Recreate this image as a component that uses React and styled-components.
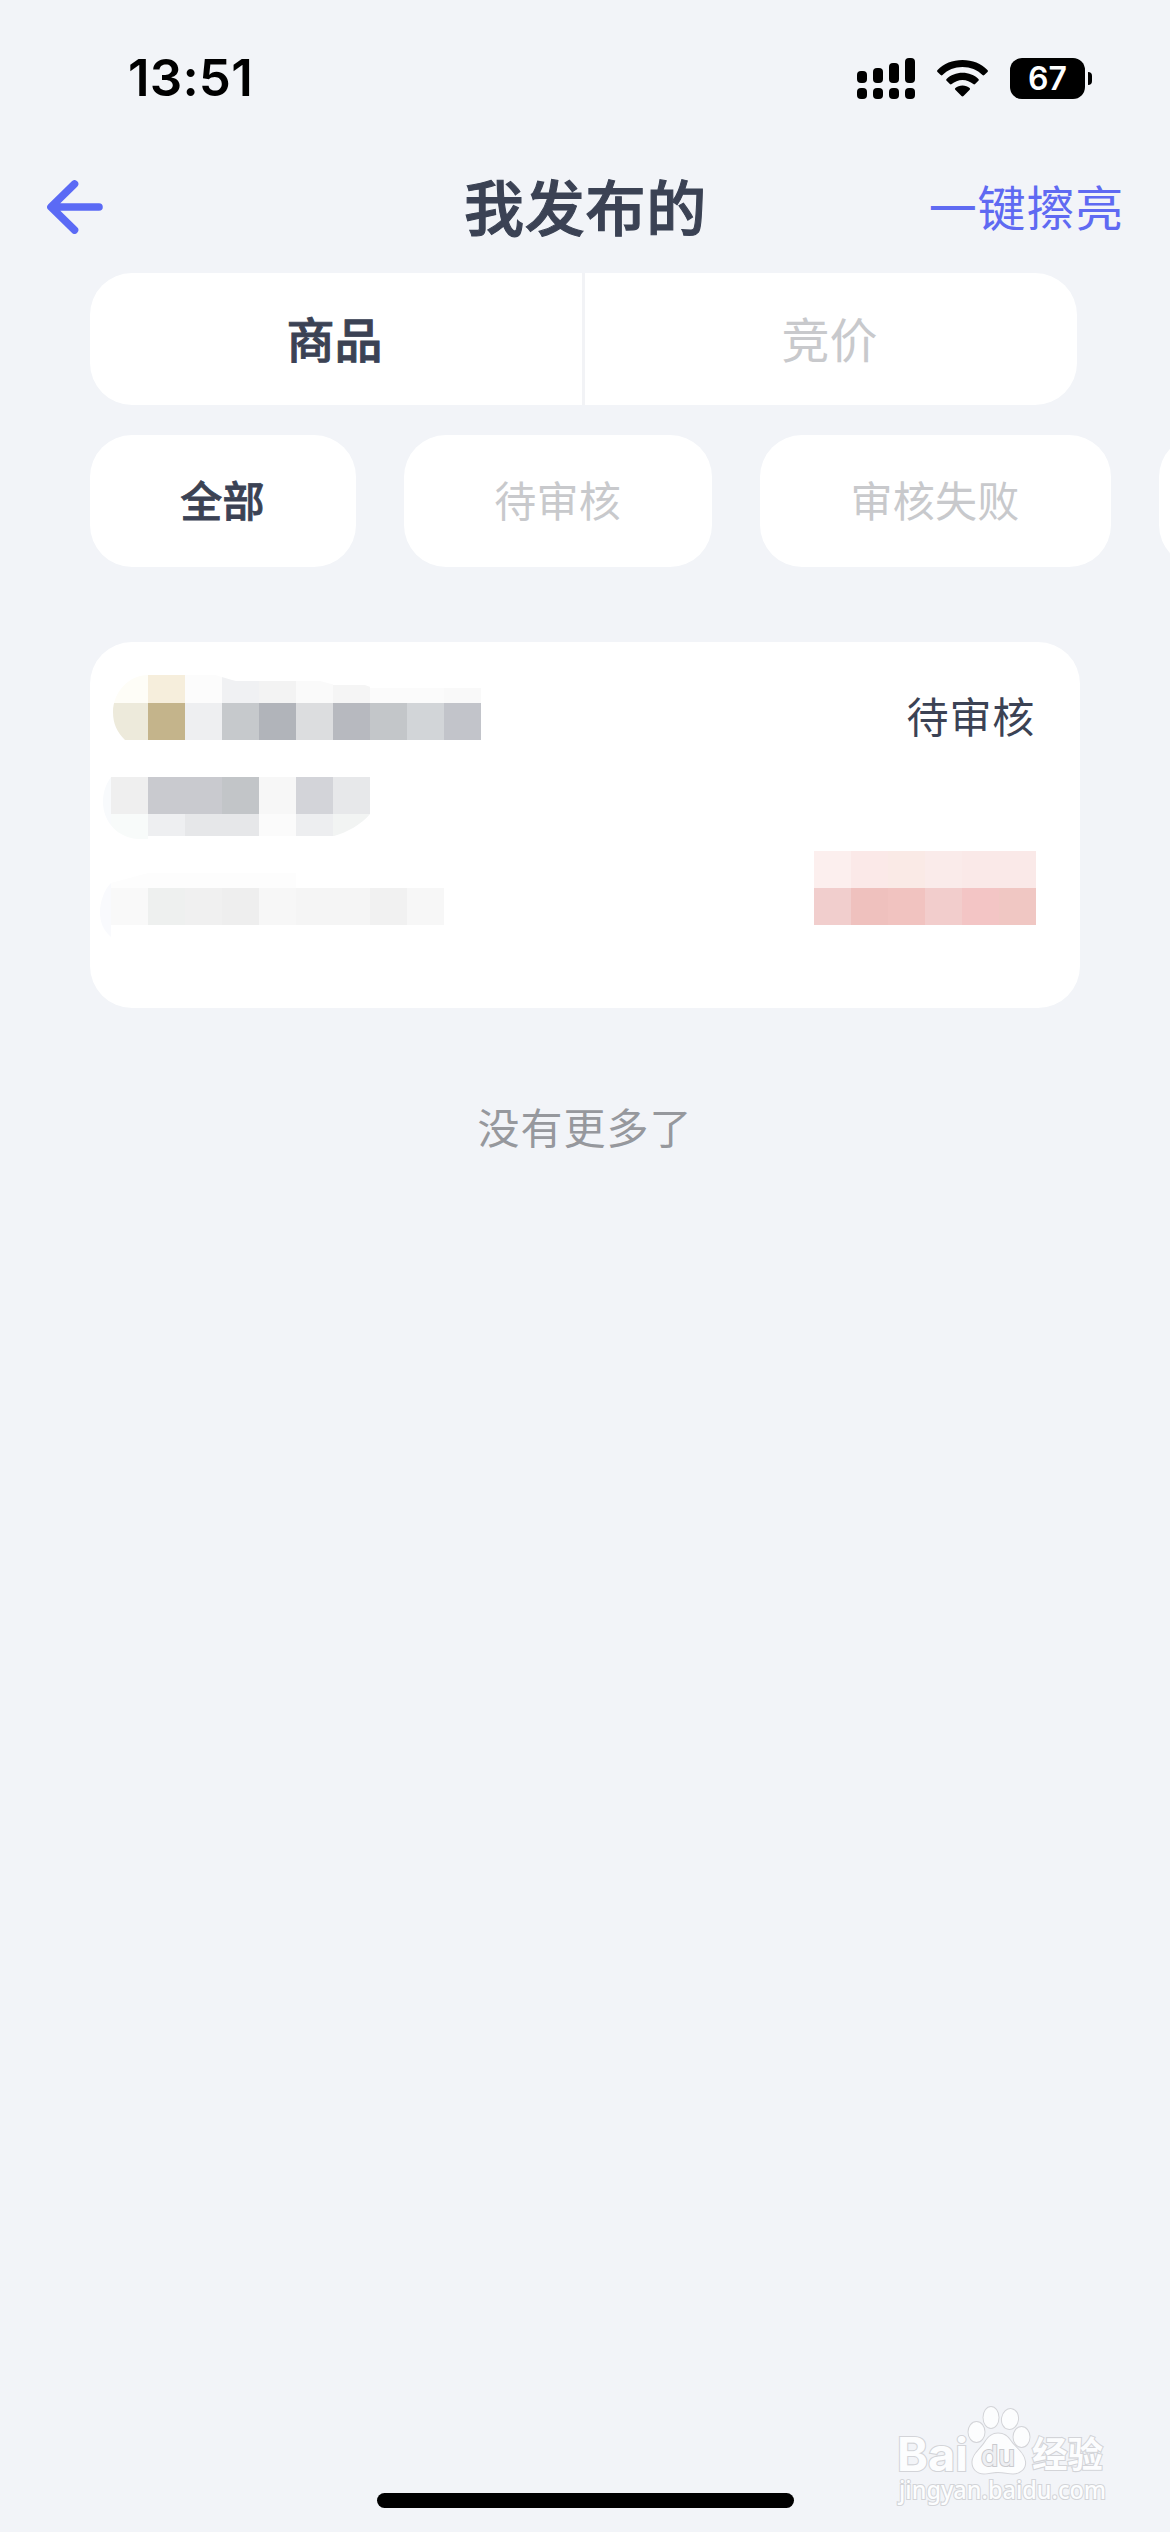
import React from "react";
import styled, { createGlobalStyle } from "styled-components";

const GlobalStyle = createGlobalStyle`
  *, *::before, *::after { box-sizing: border-box; }
  body { margin: 0; background: #f2f4f8; }
`;

const Screen = styled.div`
  display: flex;
  flex-direction: column;
  width: 1170px;
  height: 2532px;
  overflow: hidden;
  position: relative;
  background: #f2f4f8;
  color: #3b4254;
  font-family: "Noto Sans CJK SC", "Noto Sans", sans-serif;
`;

const StatusBar = styled.header`
  display: flex;
  align-items: center;
  justify-content: space-between;
  height: 156px;
  padding: 0 78px 0 128px;
`;

const Clock = styled.time`
  color: #000;
  font: 600 51px/60px Inter, sans-serif;
  letter-spacing: 0.2px;
`;

const StatusIcons = styled.div`
  display: flex;
  align-items: center;
  gap: 22px;
`;

const Battery = styled.div`
  display: flex;
  align-items: center;
  gap: 3px;
`;

const BatteryBody = styled.div`
  width: 75px;
  height: 41px;
  border-radius: 12px;
  background: #000;
  color: #fff;
  font: 600 32px/41px Inter, sans-serif;
  text-align: center;
`;

const BatteryTip = styled.div`
  width: 4px;
  height: 13px;
  border-radius: 0 4px 4px 0;
  background: #000;
`;

const NavBar = styled.nav`
  display: grid;
  grid-template-columns: 1fr auto 1fr;
  align-items: center;
  height: 104px;
  margin-bottom: 13px;
  padding: 0 46px 0 47px;
`;

const BackButton = styled.button`
  display: flex;
  justify-self: start;
  padding: 0 0 2px;
  border: 0;
  background: none;
`;

const Title = styled.h1`
  margin: 0;
  padding-bottom: 6px;
  font-size: 60px;
  font-weight: 500;
  line-height: 88px;
  letter-spacing: 0.8px;
  -webkit-text-stroke: 1.1px currentColor;
`;

const NavAction = styled.a`
  justify-self: end;
  padding-bottom: 6px;
  color: #5f6af2;
  font-size: 48px;
  line-height: 70px;
  letter-spacing: 0.8px;
`;

const Segments = styled.div`
  display: flex;
  flex: none;
  width: 987px;
  height: 132px;
  margin-left: 90px;
  border-radius: 42px;
  background: #fff;
`;

const Segment = styled.div`
  display: flex;
  flex: 1;
  align-items: center;
  justify-content: center;
  padding: 0 3px 4px 0;
  color: ${(p) => (p.$active ? "#3b4254" : "#c8c9cc")};
  font-size: 48px;
  font-weight: ${(p) => (p.$active ? 500 : 400)};
  -webkit-text-stroke: ${(p) => (p.$active ? "0.9px currentColor" : "0")};

  & + & { border-left: 3px solid #f2f3f6; }
`;

const Chips = styled.div`
  display: flex;
  flex: none;
  gap: 48px;
  margin-top: 30px;
  padding-left: 90px;
  overflow: hidden;
`;

const Chip = styled.div`
  flex: none;
  height: 132px;
  padding: 0 91.2px 0 90.2px;
  border-radius: 42px;
  background: #fff;
  color: ${(p) => (p.$active ? "#3b4254" : "#c8c9cc")};
  font-size: 42px;
  font-weight: ${(p) => (p.$active ? 500 : 400)};
  line-height: 128px;
  letter-spacing: 0.3px;
  -webkit-text-stroke: ${(p) => (p.$active ? "0.8px currentColor" : "0")};
`;

const Card = styled.article`
  display: flex;
  flex: none;
  justify-content: space-between;
  width: 990px;
  height: 366px;
  margin: 75px 0 0 90px;
  padding: 0 44px 0 8px;
  border-radius: 42px;
  background: #fff;
`;

const CardSide = styled.div`
  display: flex;
  flex-direction: column;
  align-items: flex-end;
  justify-content: space-between;
  padding: 43px 0 83px;
`;

const CardStatus = styled.span`
  padding-right: 1px;
  font-size: 42px;
  line-height: 60px;
  letter-spacing: 0.8px;
`;

const PriceMosaic = styled.div`
  display: grid;
  grid-template-columns: repeat(6, 37px);
  grid-auto-rows: 37px;
`;

const Tile = styled.i`
  background: ${(p) => p.$tone};
`;

const EndNote = styled.p`
  margin: 88px 0 0;
  color: #96989d;
  font-size: 42px;
  line-height: 60px;
  letter-spacing: 1px;
  text-align: center;
`;

const HomeIndicator = styled.div`
  width: 417px;
  height: 15px;
  margin: auto auto 24px 377px;
  border-radius: 8px;
  background: #000;
`;

const Watermark = styled.svg`
  position: absolute;
  right: 50px;
  bottom: 12px;
`;

const SIGNAL = [
  [0, 13, 12],
  [16, 10, 15],
  [32, 5, 20],
  [48, 0, 25],
];

const SignalIcon = () => (
  <svg width="58" height="41" viewBox="0 0 58 41">
    {SIGNAL.map(([x, y, h]) => (
      <g key={x}>
        <rect x={x} y={y} width="10" height={h} rx="4" />
        <rect x={x} y="30" width="10" height="11" rx="4" />
      </g>
    ))}
  </svg>
);

const WifiIcon = () => (
  <svg width="51" height="37" viewBox="0 0 51 37">
    <path d="M25.5 0C35.4 0 44.4 3.7 50.400 9.900c.7.7.7 1.300.1 2l-3.200 3.200c-.6.6-1.200.6-1.800 0C40.300 10 33.400 7.100 25.500 7.100S10.700 10 5.500 15.100c-.6.6-1.200.6-1.800 0L.5 11.900c-.6-.7-.6-1.300.1-2C6.600 3.700 15.600 0 25.500 0z" />
    <path d="M25.500 12.800c6.200 0 11.900 2.300 15.900 6.200.6.600.6 1.200 0 1.800l-3.300 3.300c-.6.6-1.200.6-1.800 0-2.900-2.600-6.600-4.200-10.800-4.200s-7.900 1.600-10.800 4.200c-.6.6-1.200.6-1.800 0L9.600 20.800c-.6-.6-.6-1.200 0-1.800 4-3.900 9.700-6.200 15.900-6.200z" />
    <path d="M25.500 25.600c2.800 0 5.300.9 7.100 2.400.6.5.6 1.100.1 1.700l-6.200 6.400c-.6.6-1.400.6-2 0l-6.200-6.400c-.5-.6-.5-1.200.1-1.700 1.800-1.500 4.300-2.400 7.100-2.400z" />
  </svg>
);

const BackIcon = () => (
  <svg width="56" height="54" viewBox="0 0 56 54" fill="none" stroke="#5b6af5" strokeWidth="7.600" strokeLinecap="round" strokeLinejoin="round">
    <path d="M27.500 4 4 27l23.500 23M6 27h46" />
  </svg>
);

/* Each entry: x, y, width, height, colour. Origin is (98, 642) on the screen. */
const HEADLINE = [
  [13, 33, 37, 28, "#fefdf7"], [50, 33, 37, 28, "#f6eedc"], [87, 33, 37, 28, "#fcfcfc"], [124, 33, 37, 28, "#f0f1f3"],
  [161, 39, 37, 22, "#f3f3f3"], [198, 39, 37, 22, "#fafafa"], [235, 43, 37, 18, "#f5f5f5"], [272, 46, 74, 15, "#fbfbfb"], [346, 46, 37, 15, "#f9f9f9"],
  [13, 61, 37, 37, "#edeadb"], [50, 61, 37, 37, "#c4b48b"], [87, 61, 37, 37, "#eeeff1"], [124, 61, 37, 37, "#c6c9cc"],
  [161, 61, 37, 37, "#b1b4ba"], [198, 61, 37, 37, "#dcdddf"], [235, 61, 37, 37, "#b7b9bf"], [272, 61, 37, 37, "#c3c6c9"],
  [309, 61, 37, 37, "#d2d5d8"], [346, 61, 37, 37, "#c2c4ca"],
];
const SUBLINE = [
  [5, 135, 8, 62, "#f8fafc"], [13, 135, 37, 37, "#efefef"], [50, 135, 74, 37, "#c9cacf"], [124, 135, 37, 37, "#c2c5c8"],
  [161, 135, 37, 37, "#f7f7f7"], [198, 135, 37, 37, "#d3d4d9"], [235, 135, 37, 37, "#e7e8ea"],
  [13, 172, 37, 25, "#f8fbfa"], [50, 172, 37, 22, "#eeeff1"], [87, 172, 74, 22, "#e6e7e9"], [161, 172, 37, 22, "#fbfbfb"],
  [198, 172, 37, 22, "#edeef0"], [235, 172, 37, 22, "#f2f4f3"],
];
const DETAIL = [
  [2, 224, 11, 72, "#f9fafd"], [13, 231, 185, 15, "#fdfdfd"],
  [13, 246, 37, 37, "#f9f9f9"], [50, 246, 37, 37, "#eef0ef"], [87, 246, 37, 37, "#f0f0f0"], [124, 246, 37, 37, "#eeeeee"],
  [161, 246, 37, 37, "#f7f7f7"], [198, 246, 74, 37, "#f5f5f5"], [272, 246, 37, 37, "#f1f1f1"], [309, 246, 37, 37, "#f7f7f7"],
];

const tiles = (list) =>
  list.map(([x, y, w, h, fill], i) => <rect key={i} x={x} y={y} width={w} height={h} fill={fill} />);

const TextMosaic = () => (
  <svg width="400" height="366" viewBox="0 0 400 366" shapeRendering="crispEdges">
    <clipPath id="headline">
      <path d="M50 33h67l17 5 4 1h84l15 4h30l8 3h110v52H27C19 90 15 82 15 70c0-20 16-37 35-37z" />
    </clipPath>
    <clipPath id="subline">
      <path d="M13 135h259v37c-8 10-24 19-36 22H62l-12 3C22 200 5 181 5 160c0-10 3-18 8-25z" />
    </clipPath>
    <clipPath id="detail">
      <path d="M13 241l37-10h296v55H13v9C5 288 2 280 2 270s4-22 11-29z" />
    </clipPath>
    <g clipPath="url(#headline)">{tiles(HEADLINE)}</g>
    <g clipPath="url(#subline)">{tiles(SUBLINE)}</g>
    <g clipPath="url(#detail)">{tiles(DETAIL)}</g>
  </svg>
);

const PRICE = [
  "#fcefee", "#fbe9e8", "#faeae6", "#faebea", "#fae9e8", "#fae9e8",
  "#f1cecd", "#efc1be", "#f1c3c0", "#f2cdcc", "#f3c5c5", "#f0c7c3",
];

const BaiduMark = () => (
  <Watermark width="240" height="130" viewBox="880 2390 240 130" fill="#fcfdfe" stroke="#d3d4d8" strokeWidth="2.200" paintOrder="stroke">
    <text x="897" y="2471" fontFamily="Inter, sans-serif" fontWeight="700" fontSize="46" textLength="71" lengthAdjust="spacingAndGlyphs">Bai</text>
    <g strokeWidth="2">
      <ellipse cx="976.500" cy="2432" rx="8" ry="10" />
      <ellipse cx="991" cy="2417.500" rx="7.500" ry="10.500" />
      <ellipse cx="1010" cy="2419" rx="8" ry="10" transform="rotate(10 1010 2419)" />
      <ellipse cx="1021.500" cy="2437" rx="8" ry="10" />
      <path d="M998 2433.500c6 0 10 3 13 8 4 6 13 11 14 20 1 7-5 12-12 12-5 0-9-1.500-15-1.500s-9 1.500-14 1.500c-7 0-12-5-11.500-12 .5-8 9-13 13-20 3-5 7-8 12.500-8z" />
    </g>
    <text x="981" y="2466" fontFamily="Inter, sans-serif" fontWeight="500" fontSize="29" textLength="34" lengthAdjust="spacingAndGlyphs" fill="#eeeff2" stroke="#c9cace" strokeWidth="2">du</text>
    <text x="1032" y="2468" fontFamily="'Noto Sans CJK SC', sans-serif" fontWeight="700" fontSize="36" textLength="71" lengthAdjust="spacingAndGlyphs">经验</text>
    <text x="899" y="2499" fontFamily="'Noto Sans', sans-serif" fontWeight="500" fontSize="25" textLength="207" lengthAdjust="spacingAndGlyphs">jingyan.baidu.com</text>
  </Watermark>
);

export default function App() {
  return (
    <Screen>
      <GlobalStyle />
      <StatusBar>
        <Clock>13:51</Clock>
        <StatusIcons>
          <SignalIcon />
          <WifiIcon />
          <Battery>
            <BatteryBody>67</BatteryBody>
            <BatteryTip />
          </Battery>
        </StatusIcons>
      </StatusBar>
      <NavBar>
        <BackButton aria-label="返回"><BackIcon /></BackButton>
        <Title>我发布的</Title>
        <NavAction>一键擦亮</NavAction>
      </NavBar>
      <Segments>
        <Segment $active>商品</Segment>
        <Segment>竞价</Segment>
      </Segments>
      <Chips>
        <Chip $active>全部</Chip>
        <Chip>待审核</Chip>
        <Chip>审核失败</Chip>
        <Chip />
      </Chips>
      <Card>
        <TextMosaic />
        <CardSide>
          <CardStatus>待审核</CardStatus>
          <PriceMosaic>
            {PRICE.map((tone, i) => <Tile key={i} $tone={tone} />)}
          </PriceMosaic>
        </CardSide>
      </Card>
      <EndNote>没有更多了</EndNote>
      <HomeIndicator />
      <BaiduMark />
    </Screen>
  );
}
